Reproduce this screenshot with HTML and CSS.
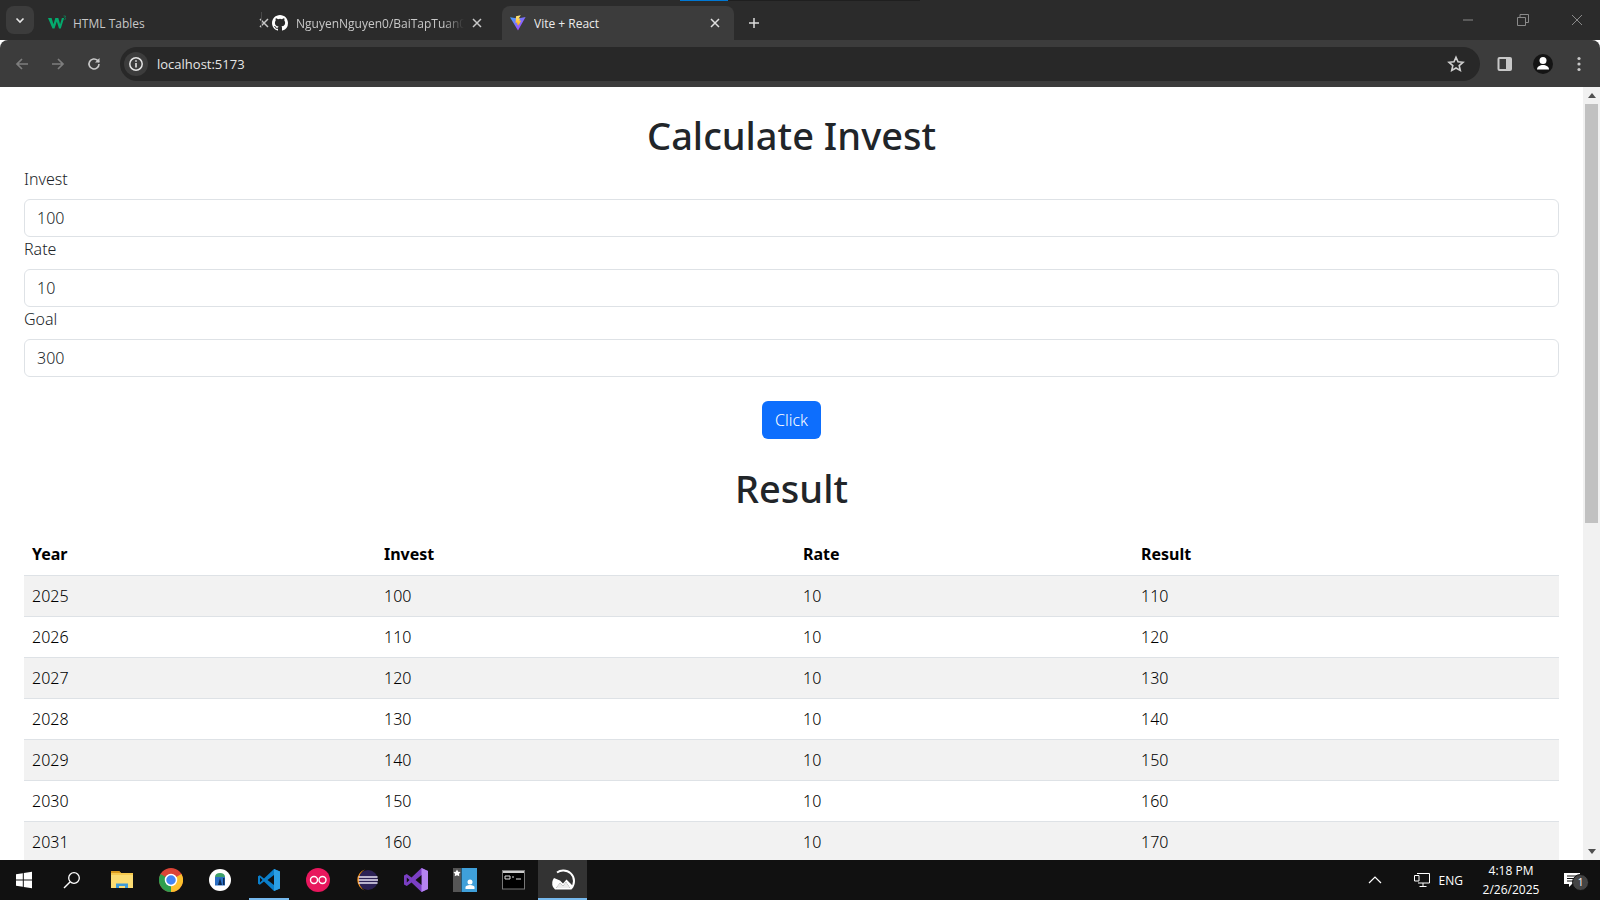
FILE: index.html
```html
<!DOCTYPE html>
<html lang="en">
<head>
<meta charset="utf-8">
<title>Vite + React</title>
<link rel="stylesheet" href="styles.css">
</head>
<body>
<div class="loadbar"><span class="load-blue"></span><span class="load-dark"></span></div>
<header class="tabstrip">
  <button class="tabsearch"><svg width="12" height="12" viewBox="0 0 12 12"><path d="M2.5 4.5 6 8l3.5-3.5" fill="none" stroke="#e8e8e8" stroke-width="1.6"/></svg></button>
  <div class="tab tab-first">
    <svg class="favicon" width="18" height="16" viewBox="0 0 18 16"><path d="M0 3h3.6l1.9 6.2L7.3 3h3l1.8 6.2L13.900 3h2.200L12.800 13.500h-1.800L8.800 6.500 6.500 13.500H4.500z" fill="#04aa6d"/><path d="M15.500 1h2v.7l-.8.800c.6 0 1 .4 1 1 0 .7-.5 1.100-1.200 1.100" fill="none" stroke="#04aa6d" stroke-width=".6"/></svg>
    <span class="tab-title">HTML Tables</span>
    <svg class="tab-x" width="10" height="10" viewBox="0 0 10 10"><path d="M1 1l8 8M9 1l-8 8" stroke="#c8c8c8" stroke-width="1.500"/></svg>
  </div>
  <span class="tabsep"></span>
  <div class="tab tab-second">
    <svg class="favicon" width="16" height="16" viewBox="0 0 16 16"><path fill="#fff" d="M8 0C3.580 0 0 3.580 0 8c0 3.540 2.290 6.530 5.470 7.590.4.070.55-.17.55-.38 0-.19-.01-.82-.01-1.490-2.010.37-2.530-.49-2.690-.94-.09-.23-.48-.94-.82-1.130-.28-.15-.68-.52-.01-.53.63-.01 1.080.58 1.230.82.72 1.210 1.870.87 2.330.66.070-.52.28-.87.51-1.070-1.780-.2-3.640-.89-3.640-3.950 0-.87.310-1.590.820-2.150-.08-.2-.36-1.020.08-2.120 0 0 .67-.21 2.200.82a7.420 7.420 0 0 1 4 0c1.530-1.040 2.200-.82 2.200-.82.44 1.100.16 1.920.08 2.120.51.560.82 1.270.82 2.150 0 3.070-1.870 3.750-3.650 3.950.29.250.54.730.54 1.480 0 1.070-.01 1.930-.01 2.200 0 .21.150.46.550.38A8.010 8.010 0 0 0 16 8c0-4.420-3.580-8-8-8z"/></svg>
    <span class="tab-title tab-fade">NguyenNguyen0/BaiTapTuan02</span>
    <svg class="tab-x" width="10" height="10" viewBox="0 0 10 10"><path d="M1 1l8 8M9 1l-8 8" stroke="#c8c8c8" stroke-width="1.500"/></svg>
  </div>
  <div class="tab tab-active">
    <svg class="favicon" width="16" height="16" viewBox="0 0 16 16"><defs><linearGradient id="vg" x1="0" y1="0" x2="1" y2="1"><stop offset="0" stop-color="#41a5ff"/><stop offset="1" stop-color="#bd34fe"/></linearGradient><linearGradient id="vy" x1="0" y1="0" x2="0" y2="1"><stop offset="0" stop-color="#ffea83"/><stop offset="1" stop-color="#ffa800"/></linearGradient></defs><path d="M0 2.200 8 3.600l7.600-1.500L8 15.500z" fill="url(#vg)"/><path d="M10.800 .3 6 1.300l-.4 6.600 1.800-.4-.4 2.300 1.400-.4-.2 1.800 3-5.600-1.800.4.700-2.500-1.600.3z" fill="url(#vy)"/></svg>
    <span class="tab-title tab-title-active">Vite + React</span>
    <svg class="tab-x" width="10" height="10" viewBox="0 0 10 10"><path d="M1 1l8 8M9 1l-8 8" stroke="#e0e0e0" stroke-width="1.500"/></svg>
  </div>
  <svg class="newtab" width="12" height="12" viewBox="0 0 12 12"><path d="M6 1v10M1 6h10" stroke="#dcdcdc" stroke-width="1.500"/></svg>
  <div class="winctrl">
    <svg width="12" height="12" viewBox="0 0 12 12"><path d="M1 6h10" stroke="#8a8a8a"/></svg>
    <svg width="12" height="12" viewBox="0 0 12 12"><path d="M.5 3.500h8v8h-8zM3 3.500V.5h8.500v8h-3" fill="none" stroke="#8a8a8a"/></svg>
    <svg width="12" height="12" viewBox="0 0 12 12"><path d="M1 1l10 10M11 1 1 11" stroke="#8a8a8a"/></svg>
  </div>
</header>
<nav class="toolbar">
  <svg class="navicon" width="16" height="16" viewBox="0 0 16 16"><path d="M14 8H3M8 3 3 8l5 5" fill="none" stroke="#7d7d7d" stroke-width="1.700"/></svg>
  <svg class="navicon" width="16" height="16" viewBox="0 0 16 16"><path d="M2 8h11M8 3l5 5-5 5" fill="none" stroke="#7d7d7d" stroke-width="1.700"/></svg>
  <svg class="navicon" width="16" height="16" viewBox="0 0 16 16"><path d="M13 8a5 5 0 1 1-1.500-3.600L13 6" fill="none" stroke="#c8c8c8" stroke-width="1.600"/><path d="M13.500 2v4.500H9z" fill="#c8c8c8"/></svg>
  <div class="omnibox">
    <span class="site-info"><svg width="16" height="16" viewBox="0 0 16 16"><circle cx="8" cy="8" r="6.200" fill="none" stroke="#e4e4e4" stroke-width="1.500"/><path d="M8 7v4.500M8 4.300v1.500" stroke="#e4e4e4" stroke-width="1.600"/></svg></span>
    <span class="url">localhost:5173</span>
    <svg class="star" width="18" height="18" viewBox="0 0 18 18"><path d="M9 2.200l2 4.600 5 .5-3.800 3.300 1.100 4.900L9 13l-4.300 2.500 1.100-4.900L2 7.300l5-.5z" fill="none" stroke="#d0d0d0" stroke-width="1.600"/></svg>
  </div>
  <svg class="sidepanel" width="16" height="16" viewBox="0 0 16 16"><rect x=".5" y="1" width="14.500" height="14" rx="2" fill="#c8c8c8"/><rect x="2.500" y="3" width="6.500" height="10" fill="#3c3c3c"/></svg>
  <span class="avatar"><svg width="20" height="20" viewBox="0 0 20 20"><circle cx="10" cy="6.500" r="3.500" fill="#fff"/><path d="M4 15.500c0-3 3-4.500 6-4.500s6 1.500 6 4.500z" fill="#fff"/></svg></span>
  <svg class="menu" width="4" height="16" viewBox="0 0 4 16"><circle cx="2" cy="2.500" r="1.600" fill="#c8c8c8"/><circle cx="2" cy="8" r="1.600" fill="#c8c8c8"/><circle cx="2" cy="13.500" r="1.600" fill="#c8c8c8"/></svg>
</nav>
<div class="viewport">
  <main class="page">
    <h1 class="title">Calculate Invest</h1>
    <div class="field"><label class="label">Invest</label><input class="input" value="100"></div>
    <div class="field"><label class="label">Rate</label><input class="input" value="10"></div>
    <div class="field"><label class="label">Goal</label><input class="input" value="300"></div>
    <div class="actions"><button class="btn">Click</button></div>
    <h1 class="title result-title">Result</h1>
    <table class="table">
      <colgroup><col class="c1"><col class="c2"><col class="c3"><col class="c4"></colgroup>
      <thead><tr><th>Year</th><th>Invest</th><th>Rate</th><th>Result</th></tr></thead>
      <tbody>
        <tr><td>2025</td><td>100</td><td>10</td><td>110</td></tr>
        <tr><td>2026</td><td>110</td><td>10</td><td>120</td></tr>
        <tr><td>2027</td><td>120</td><td>10</td><td>130</td></tr>
        <tr><td>2028</td><td>130</td><td>10</td><td>140</td></tr>
        <tr><td>2029</td><td>140</td><td>10</td><td>150</td></tr>
        <tr><td>2030</td><td>150</td><td>10</td><td>160</td></tr>
        <tr><td>2031</td><td>160</td><td>10</td><td>170</td></tr>
      </tbody>
    </table>
  </main>
  <aside class="scrollbar">
    <span class="arrow-up"></span>
    <span class="thumb"></span>
    <span class="arrow-down"></span>
  </aside>
</div>
<footer class="taskbar">
  <span class="tb tb-48"><svg width="18" height="18" viewBox="0 0 18 18"><path d="M1 3.200 7.800 2.200v6.300H1zM8.800 2 17 .8v7.700H8.800zM1 9.500h6.800v6.300L1 14.800zM8.800 9.500H17v7.700l-8.200-1.200z" fill="#fff"/></svg></span>
  <span class="tb tb-48 tb-search"><svg width="18" height="18" viewBox="0 0 18 18"><circle cx="11" cy="7" r="5.300" fill="none" stroke="#fff" stroke-width="1.300"/><path d="M7 11 1 17" stroke="#fff" stroke-width="1.400"/></svg></span>
  <span class="tb tb-run"><svg width="22" height="20" viewBox="0 0 22 20"><path d="M0 1h8l2 2h12v15H0z" fill="#f6c94e"/><path d="M0 1h8l2 2H0z" fill="#d99a1d"/><path d="M0 5h22v13H0z" fill="#fbdc72"/><path d="M5 18v-4.500h12V18h-3v-2H8v2z" fill="#3c9ad8"/></svg></span>
  <span class="tb tb-run"><svg width="24" height="24" viewBox="0 0 24 24"><circle cx="12" cy="12" r="12" fill="#db4437"/><path d="M12 12 22.400 6A12 12 0 0 1 12 24z" fill="#fbc02d"/><path d="M12 12 12 24A12 12 0 0 1 1.600 6z" fill="#2e9e4f"/><circle cx="12" cy="12" r="5.500" fill="#4285f4" stroke="#fff" stroke-width="1.500"/></svg></span>
  <span class="tb"><svg width="22" height="22" viewBox="0 0 22 22"><circle cx="11" cy="11" r="11" fill="#fff"/><path d="M6 8c0-2.500 2-4 5-4s5 1.500 5 4z" fill="#3ea06a"/><path d="M6 8h10v8.500H6z" fill="#2a6fc4"/><path d="M9 16l2-7 2 7zM14 9h1.500v7H14z" fill="#0d2c55"/></svg></span>
  <span class="tb tb-run2"><svg width="24" height="24" viewBox="0 0 24 24"><path d="M17 1 7 10.500 2.800 7.200 1 8.200v7.600l1.800 1 4.200-3.300L17 23l6-2.500v-17z" fill="#0a7fcb"/><path d="M17 7v10l-6.500-5z" fill="#111"/><path d="M17 1l6 2.500v17L17 23z" fill="#2ba0e6"/><path d="M3 9.500 5.500 12 3 14.500z" fill="#111"/></svg></span>
  <span class="tb"><svg width="24" height="24" viewBox="0 0 24 24"><circle cx="12" cy="12" r="12" fill="#e8175d"/><circle cx="8" cy="12" r="3.500" fill="none" stroke="#fff" stroke-width="1.400"/><circle cx="16.500" cy="12" r="3.500" fill="none" stroke="#fff" stroke-width="1.400"/></svg></span>
  <span class="tb"><svg width="24" height="24" viewBox="0 0 24 24"><circle cx="13" cy="12" r="10" fill="#2c2255"/><path d="M10 1.500A11 11 0 0 0 10 22.500 11.500 11.500 0 0 1 4 12 11.500 11.500 0 0 1 10 1.500z" fill="#f7941e"/><path d="M3.500 9h19M3.500 12h19.500M3.500 15h19" stroke="#e8e4f4" stroke-width="1.400"/></svg></span>
  <span class="tb"><svg width="24" height="24" viewBox="0 0 24 24"><path d="M17.500 0 24 3v18l-6.500 3-10-9.500L2.800 18 0 16.500v-9L2.800 6l4.700 3.500z" fill="#7b3fc4"/><path d="M17.500 0 24 3v18l-6.500 3z" fill="#b583f0"/><path d="M17.500 7v10l-6-5zM2.800 9.500v5L5.500 12z" fill="#111"/></svg></span>
  <span class="tb tb-run"><svg width="24" height="24" viewBox="0 0 24 24"><rect width="8" height="24" fill="#555"/><rect x="8.500" width="15.500" height="24" fill="#3fa0da"/><path d="M4 1.500 5.200 3.800 7.500 4 6 6l.3 2.300L4 7.300 1.700 8.300 2 6 .5 4l2.300-.2z" fill="#fff"/><circle cx="17" cy="14" r="2.500" fill="#fff"/><path d="M12.500 21v-2c0-1 2-2 4.500-2s4.500 1 4.500 2v2z" fill="#fff"/></svg></span>
  <span class="tb tb-run"><svg width="24" height="20" viewBox="0 0 24 20"><rect x=".5" y=".5" width="22" height="18.500" fill="#000" stroke="#777"/><rect x="1" y="1" width="21" height="2" fill="#ccc"/><path d="M3 6h5v3H3zM10 7h2M14 9h5" stroke="#ddd" fill="none"/></svg></span>
  <span class="tb tb-active"><svg width="26" height="24" viewBox="0 0 26 24"><path d="M7 4.500A11 11 0 0 1 13 2.500 10.500 10.500 0 0 1 24 13a10.500 10.500 0 0 1-3 7.500" fill="none" stroke="#fff" stroke-width="2"/><path d="M4 10a9 9 0 0 0-1 9l2 2.500h16.500l1-4-6-6-3.500 4-3-3z" fill="#fff"/><path d="M6 20l4-5 3 3 3-4 4 6z" fill="#333"/><path d="M10 15l3 3 3-4 4 6H6z" fill="#fff" opacity=".9"/></svg></span>
  <div class="tray">
    <svg class="tray-up" width="14" height="8" viewBox="0 0 14 8"><path d="M1 7l6-6 6 6" fill="none" stroke="#fff" stroke-width="1.200"/></svg>
    <svg class="tray-net" width="16" height="15" viewBox="0 0 16 15"><path d="M3 .5h12.500v9.500H4M.5 2.500H5v5.500H.5zM9 10v3M5.500 13.500h7" fill="none" stroke="#fff"/></svg>
    <span class="tray-text lang">ENG</span>
    <span class="clock"><span>4:18 PM</span><span>2/26/2025</span></span>
    <span class="notif">
      <svg width="16" height="14" viewBox="0 0 16 14"><path d="M0 0h16v11H8l-3 3v-3H0z" fill="#fff"/><path d="M3 3h10M3 5.500h10M3 8h7" stroke="#111"/></svg>
      <span class="badge">1</span>
    </span>
  </div>
</footer>
</body>
</html>
```

FILE: styles.css
```css
* { box-sizing: border-box; }
html, body { margin: 0; height: 100%; }
body {
  height: 900px;
  overflow: hidden;
  display: flex;
  flex-direction: column;
  position: relative;
  font-family: "Open Sans", "Noto Sans", sans-serif;
  background: #fff;
}

/* tab strip */
.loadbar { position: absolute; top: 0; left: 680px; display: flex; height: 1px; }
.load-blue { width: 48px; background: #0078d4; }
.load-dark { width: 192px; background: #1f1f1f; }
.tabstrip {
  height: 40px;
  flex: none;
  background: #2b2b2b;
  display: flex;
  align-items: flex-end;
  padding-left: 6px;
}
.tabsearch {
  width: 28px;
  height: 28px;
  margin-bottom: 6px;
  border: 0;
  border-radius: 8px;
  background: #3c3c3c;
  padding: 0;
  display: flex;
  align-items: center;
  justify-content: center;
}
.tab {
  height: 34px;
  display: flex;
  align-items: center;
  color: #c8c8c8;
  font-size: 12px;
}
.favicon { flex: none; }
.tab-first { width: 227px; padding-left: 14px; }
.tab-first .tab-title { margin-left: 7px; width: 186px; }
.tabsep { width: 1px; height: 16px; background: #4a4a4a; margin-bottom: 12px; }
.tab-second { width: 240px; padding-left: 10px; }
.tab-second .tab-title { margin-left: 8px; width: 176px; }
.tab-title { white-space: nowrap; overflow: hidden; flex: none; }
.tab-fade { -webkit-mask-image: linear-gradient(90deg, #000 88%, transparent); mask-image: linear-gradient(90deg, #000 88%, transparent); width: 168px !important; margin-right: 8px; }
.tab-x { flex: none; }
.tab-active {
  width: 232px;
  background: #3c3c3c;
  border-radius: 8px 8px 0 0;
  padding-left: 8px;
  color: #ececec;
}
.tab-title-active { margin-left: 8px; width: 176px; }
.newtab { margin: 0 0 11px 14px; }
.winctrl {
  margin-left: auto;
  height: 40px;
  width: 138px;
  margin-right: 0;
  display: flex;
  align-items: center;
  justify-content: space-between;
  padding: 0 17px 0 0;
  margin-bottom: 0;
  gap: 34px;
}

/* toolbar */
.toolbar {
  height: 47px;
  flex: none;
  background: #3c3c3c;
  display: flex;
  align-items: center;
  padding-left: 14px;
  border-radius: 8px 8px 0 0;
}
.navicon { margin-right: 20px; flex: none; }
.toolbar .navicon:nth-child(3) { margin-right: 18px; }
.omnibox {
  width: 1360px;
  height: 34px;
  border-radius: 17px;
  background: #282828;
  display: flex;
  align-items: center;
  padding-left: 4px;
  flex: none;
}
.site-info {
  width: 24px;
  height: 24px;
  border-radius: 50%;
  background: #3c3c3c;
  display: flex;
  align-items: center;
  justify-content: center;
}
.url { margin-left: 9px; font-size: 13px; color: #e6e6e6; }
.star { margin-left: auto; margin-right: 15px; }
.sidepanel { margin-left: 17px; flex: none; }
.avatar {
  width: 20px;
  height: 20px;
  border-radius: 50%;
  background: #141414;
  margin-left: 20px;
  display: flex;
  align-items: center;
  justify-content: center;
}
.menu { margin-left: 24px; }

/* page */
.viewport { flex: 1; min-height: 0; display: flex; }
.page {
  flex: 1;
  min-width: 0;
  overflow: hidden;
  padding: 24px 24px 0;
  color: #212529;
  font-family: "Noto Sans", "Open Sans", sans-serif;
  font-size: 16px;
  line-height: 24px;
}
.title {
  margin: 0 0 8px;
  font-size: 38px;
  font-weight: 500;
  line-height: 48px;
  text-align: center;
}
.field { display: block; }
.label { display: block; margin-bottom: 8px; font-weight: 300; }
.input {
  display: block;
  width: 100%;
  height: 38px;
  padding: 6px 12px;
  border: 1px solid #dee2e6;
  border-radius: 6px;
  font: inherit;
  font-weight: 300;
  color: #212529;
  background: #fff;
}
.actions { margin-top: 24px; display: flex; justify-content: center; }
.btn {
  width: 59px;
  height: 38px;
  border: 0;
  border-radius: 6px;
  background: #0d6efd;
  color: #fff;
  font: inherit;
  font-weight: 300;
  padding: 0;
}
.result-title { margin-top: 25px; margin-bottom: 22px; }
.table { width: 100%; border-collapse: collapse; table-layout: fixed; color: #000; }
.c1 { width: 352px; }
.c2 { width: 419px; }
.c3 { width: 338px; }
th, td {
  padding: 8px;
  text-align: left;
  height: 41px;
  border-bottom: 1px solid #dee2e6;
  font-weight: 300;
}
th { font-weight: 700; }
tbody tr:nth-child(odd) td { background: #f2f2f2; }

/* scrollbar */
.scrollbar {
  width: 17px;
  flex: none;
  background: #f1f1f1;
  display: flex;
  flex-direction: column;
  align-items: center;
  position: relative;
}
.arrow-up { margin-top: 6px; border: 4px solid transparent; border-top: 0; border-bottom: 5px solid #505050; }
.thumb { width: 13px; height: 419px; margin-top: 6px; background: #c1c1c1; flex: none; }
.arrow-down { margin-top: auto; margin-bottom: 6px; border: 4px solid transparent; border-bottom: 0; border-top: 5px solid #505050; }

/* taskbar */
.taskbar {
  height: 40px;
  flex: none;
  background: #111;
  display: flex;
  align-items: stretch;
  color: #fff;
}
.tb {
  width: 49px;
  flex: none;
  display: flex;
  align-items: center;
  justify-content: center;
}
.tb-48 { width: 48px; }
.tb-search { margin-right: 1px; }
.tb-run { box-shadow: inset 0 -2px 0 #111, inset 0 -2px 0 #76b9ed; background: linear-gradient(#76b9ed, #76b9ed) center bottom / 40px 2px no-repeat; }
.tb-run2 { background: linear-gradient(#76b9ed, #76b9ed) center bottom / 40px 2px no-repeat; }
.tb-active { background: #333 linear-gradient(#76b9ed, #76b9ed) center bottom / 100% 2px no-repeat; }
.tray { margin-left: auto; display: flex; align-items: center; font-family: "Open Sans", sans-serif; }
.tray-up { margin-right: 32px; }
.tray-net { margin-right: 9px; }
.tray-text { font-size: 12px; }
.clock {
  display: flex;
  flex-direction: column;
  align-items: center;
  font-size: 12px;
  line-height: 19px;
  margin-left: 13px;
  width: 70px;
}
.notif { position: relative; width: 48px; margin-left: 6px; height: 40px; display: flex; align-items: center; padding-left: 12px; }
.badge {
  position: absolute;
  left: 20px;
  top: 14px;
  width: 17px;
  height: 17px;
  border-radius: 50%;
  background: #444;
  border: 1px solid #111;
  font-size: 10px;
  line-height: 15px;
  text-align: center;
  color: #fff;
}
```
